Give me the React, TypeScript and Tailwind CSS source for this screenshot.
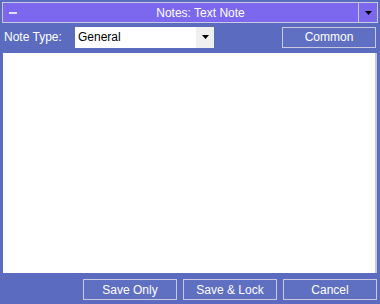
import React, { useState } from "react";

function NoteWindow() {
  const [noteType, setNoteType] = useState("General");
  const [text, setText] = useState("");

  return (
    <div className="w-[380px] h-[304px] bg-[#5b6bc0] flex flex-col text-[12px] text-white font-['Liberation_Sans',Arial,sans-serif] overflow-hidden">
      <div className="mx-[2px] mt-[2px] h-[21px] flex border border-[#c8c8e0] bg-[#7b68ee]">
        <div className="w-[40px] flex items-center pl-[6px]">
          <div className="w-[8px] h-[2px] bg-[#e0e0f0]" />
        </div>
        <div className="flex-1 flex items-center justify-center">Notes: Text Note</div>
        <div className="w-[19px] border-l border-[#c8c8e0] flex items-center justify-center">
          <svg width="7" height="4" viewBox="0 0 7 4">
            <path d="M0 0h7L3.5 4z" fill="#000" />
          </svg>
        </div>
      </div>

      <div className="flex items-center h-[26px] mt-[1px] px-[4px]">
        <span className="w-[71px]">Note Type:</span>
        <div className="w-[139px] h-[21px] bg-white flex text-black">
          <span className="flex-1 flex items-center pl-[3px]">{noteType}</span>
          <button
            className="w-[18px] bg-[#f0f0f0] flex items-center justify-center"
            onClick={() => setNoteType(noteType)}
          >
            <svg width="7" height="4" viewBox="0 0 7 4">
              <path d="M0 0h7L3.5 4z" fill="#000" />
            </svg>
          </button>
        </div>
        <div className="flex-1" />
        <button className="w-[94px] h-[21px] border border-[#c8c8e0] bg-[#5f6fc2] text-white">Common</button>
      </div>

      <textarea
        value={text}
        onChange={(e) => setText(e.target.value)}
        className="mx-[3px] mt-[3px] h-[220px] bg-white border-r-2 border-[#c8c8d8] resize-none outline-none text-black p-1"
      />

      <div className="flex justify-end gap-[6px] pr-[3px] mt-[6px]">
        <button className="w-[94px] h-[21px] border border-[#c8c8e0] bg-[#5f6fc2]">Save Only</button>
        <button className="w-[94px] h-[21px] border border-[#c8c8e0] bg-[#5f6fc2]">Save &amp; Lock</button>
        <button className="w-[94px] h-[21px] border border-[#c8c8e0] bg-[#5f6fc2]">Cancel</button>
      </div>
    </div>
  );
}

export default function App() {
  return <NoteWindow />;
}
